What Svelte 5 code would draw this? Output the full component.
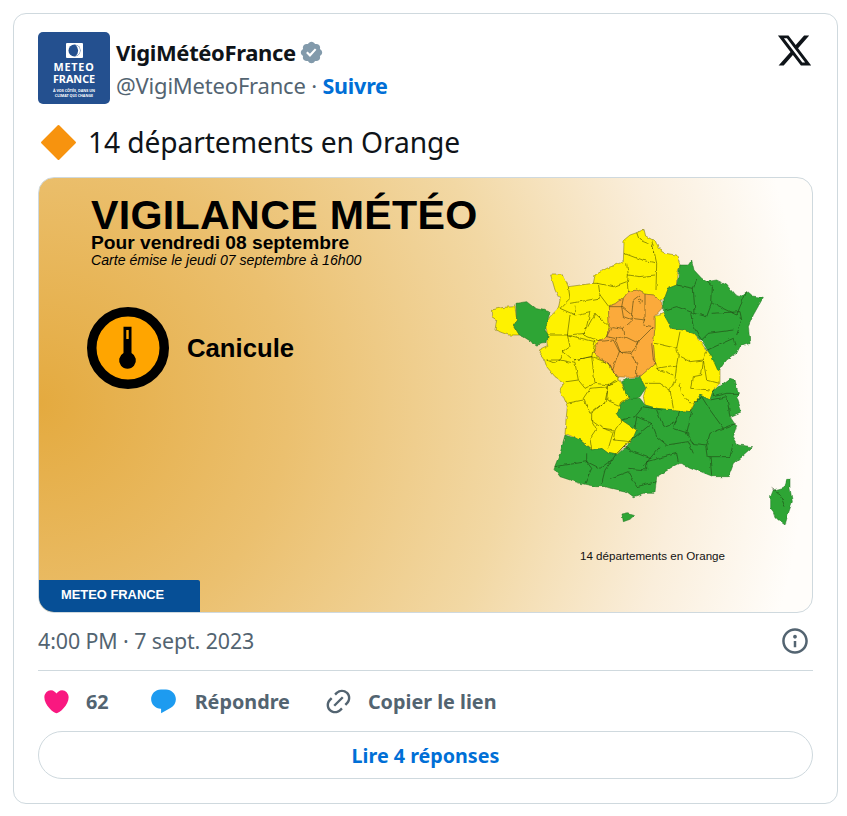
<script>
  const yellow = [
    "432,60 450,45 470,38 492,28 497,48 515,58 525,60 535,85 560,100 590,105 600,135 590,170 590,195 565,205 552,240 540,240 520,225 495,222 470,210 445,215 430,235 410,250 385,258 388,320 380,350 355,365 340,395 350,410 385,430 395,450 415,470 425,490 440,520 450,535 420,555 412,580 425,600 470,630 455,665 430,680 410,705 385,700 365,685 335,690 300,660 255,640 258,600 262,560 240,510 255,490 225,470 200,440 190,410 175,390 205,375 200,330 195,315 210,290 235,265 240,240 225,210 212,165 250,165 265,200 340,190 345,165 380,145 430,125",
    "525,290 550,280 575,325 610,330 640,340 680,390 700,410 720,450 720,490 700,510 690,540 660,525 630,575 590,570 550,568 530,565 495,555 490,530 497,505 480,470 525,430 520,370 525,320",
    "35,270 70,262 105,260 110,300 100,315 118,345 85,345 45,330 50,300 35,290"
  ];
  const orange = "430,235 445,215 470,210 495,222 520,225 540,240 552,262 525,290 525,320 520,370 525,430 480,470 440,472 415,470 395,450 385,430 350,410 340,395 355,365 380,350 388,320 385,258 410,250";
  const green = [
    "600,135 625,135 635,120 642,150 665,175 680,185 710,180 740,195 765,225 780,230 800,215 815,228 850,232 820,285 805,320 810,370 780,380 770,400 740,420 715,455 695,410 670,370 640,340 610,330 575,325 550,280 552,240 565,205 590,195",
    "108,250 140,245 165,265 210,275 195,330 205,345 200,370 170,375 130,350 118,345 100,315 110,300",
    "425,485 445,475 480,472 497,505 480,530 460,540 440,525",
    "700,510 730,490 750,475 765,480 775,520 770,530 785,575 750,590 770,620 760,650 775,675 818,680 790,705 760,730 745,770 700,770 650,750 600,730 580,740 530,770 525,820 490,820 460,830 440,815 375,800 350,800 300,790 240,770 222,745 240,700 255,645 300,660 335,690 365,685 385,700 410,705 455,665 470,630 425,600 412,580 420,555 450,535 480,535 495,555 530,565 590,570 630,575 660,525 690,540",
    "426,882 445,878 465,884 450,898 430,905",
    "920,775 930,775 930,805 937,845 925,880 915,915 895,900 885,890 880,875 872,865 872,830 880,810 915,800"
  ];
  const lines = [
    "M470 38 L478 60 L515 75 L525 100 M515 60 L530 130 L528 210 M432 100 L485 120 L525 128 M445 165 L480 170 L525 165 M445 165 L440 130 M445 165 L442 190 L445 215",
    "M340 190 L355 190 L400 200 L440 185 M355 190 L360 225 M265 200 L270 235 L240 265 M270 250 L355 235 L360 225 L385 258 M285 260 L283 285",
    "M240 265 L285 285 L330 275 L315 340 L262 345 L270 285 M345 280 L388 320 M345 280 L310 345 L355 362 M205 345 L262 345 L270 380 L250 395 L240 420 L225 430 L200 420",
    "M262 345 L345 365 L335 410 L280 420 L250 395 M200 420 L240 420 L285 430 L295 480 L260 485 M280 420 L335 410 L345 490 L315 505 L295 480 M335 410 L385 430 L415 475 L385 495 L345 490",
    "M420 480 L385 495 L380 540 L415 555 L450 530 M330 505 L385 500 L375 545 L330 580 L310 535 Z M260 550 L310 540 M375 545 L335 580 L335 600 L370 625 L405 630 L425 600 M335 600 L350 625 L330 655 L335 690 M370 625 L400 635 L385 685 M405 630 L400 660 L455 665",
    "M525 370 L590 385 L600 335 M515 370 L520 420 L530 445 L590 435 L595 405 L590 385 M600 410 L630 425 L670 420 L680 395 M670 420 L665 465 L640 470 L635 505 L690 510 M590 435 L585 480 L570 510 L580 565 M530 445 L580 465 M495 490 L540 490 L570 510 M600 490 L605 520 L630 550 M670 420 L680 480 L718 490",
    "M430 235 L425 260 L455 285 L460 240 L480 225 M495 222 L495 295 L490 310 M455 285 L455 295 L495 300 M385 260 L425 260 L430 290 L458 300 L430 325 L395 320 M430 325 L435 350 L472 368 L520 320 M490 315 L520 320 M395 320 L380 350 L405 355 L420 395 L470 390 L472 368 M430 350 L405 355 M355 365 L400 360 L418 395 L398 450 M418 395 L450 400 L470 430 L470 470 M450 400 L478 365",
    "M590 195 L640 205 L650 180 M640 205 L645 280 L630 275 L590 260 L555 270 M645 280 L680 290 L695 250 L697 200 L680 185 M697 250 L770 285 L780 260 L800 215 M695 280 L780 275 L785 300 L770 345 M632 280 L640 320 L665 360 L685 340 L760 330 M682 390 L760 355 L765 375",
    "M700 510 L700 530 L740 520 L775 520 M690 540 L740 530 L750 590 M630 575 L640 550 L665 530 L690 570 L730 625 L690 640 L680 675 M730 625 L770 610 M635 575 L620 640 L635 670 L680 675 L685 710 L750 710 L760 670 M690 710 L695 765 M600 570 L580 625 L625 640 M530 570 L550 620 L590 605",
    "M470 590 L515 610 L530 650 L560 675 L625 665 L640 700 M515 610 L460 655 L430 680 L470 700 L510 715 L540 680 M430 680 L410 700 L375 750 L365 790 M320 700 L320 725 L360 745 L395 720 M225 740 L320 725 L335 745 L315 790 M390 775 L445 755 L470 800 L530 785 M445 745 L500 750 L500 725 L590 700 L595 725 M470 590 L465 625 M545 570 L490 560 L465 590 L425 600 M490 740 L510 715",
    "M875 805 L900 825 L915 860"
  ];
</script>

<div class="card">
  <header class="head">
    <div class="avatar">
      <div class="logo-mark"><svg viewBox="0 0 17 15" width="17" height="15"><circle cx="8.500" cy="7.500" r="6" fill="#24508f"/><path d="M9.500 2a5.600 5.600 0 0 1 0 11 7 7 0 0 0 0-11z" fill="#fff"/></svg></div>
      <div class="logo-name"><span class="l1">METEO</span><span class="l2">FRANCE</span></div>
      <div class="logo-tag">À VOS CÔTÉS, DANS UN<br />CLIMAT QUI CHANGE</div>
    </div>
    <div class="who">
      <div class="name-row">
        <span class="name">VigiMétéoFrance</span>
        <svg class="badge" viewBox="0 0 24 24"><path d="M22.25 12c0-1.43-.88-2.67-2.19-3.34.46-1.39.2-2.9-.81-3.91s-2.52-1.27-3.91-.81c-.66-1.31-1.91-2.19-3.34-2.19s-2.67.88-3.33 2.19c-1.4-.46-2.91-.2-3.92.81s-1.26 2.52-.8 3.91c-1.31.67-2.2 1.91-2.2 3.34s.89 2.67 2.2 3.34c-.46 1.39-.21 2.9.8 3.91s2.52 1.26 3.91.81c.67 1.31 1.91 2.19 3.34 2.19s2.68-.88 3.34-2.19c1.39.45 2.9.2 3.91-.81s1.27-2.52.81-3.91c1.31-.67 2.19-1.91 2.19-3.34zm-11.71 4.2L6.8 12.46l1.41-1.42 2.26 2.26 4.8-5.23 1.47 1.36-6.2 6.77z"/></svg>
      </div>
      <div class="handle-row"><span class="handle">@VigiMeteoFrance</span> · <span class="follow">Suivre</span></div>
    </div>
    <svg class="x" viewBox="0 0 24 24"><path d="M18.244 2.25h3.308l-7.227 8.26 8.502 11.24H16.17l-5.214-6.817L4.99 21.75H1.68l7.73-8.835L1.254 2.25H8.08l4.713 6.231zm-1.161 17.52h1.833L7.084 4.126H5.117z"/></svg>
  </header>

  <p class="text">
    <svg class="diamond" viewBox="0 0 36 36"><polygon points="18,2 34,18 18,34 2,18" /></svg>
    <span>14 départements en Orange</span>
  </p>

  <div class="poster">
    <div class="poster-head">
      <div class="p-title">VIGILANCE MÉTÉO</div>
      <div class="p-sub">Pour vendredi 08 septembre</div>
      <div class="p-date">Carte émise le jeudi 07 septembre à 16h00</div>
    </div>
    <div class="hazard">
      <svg class="thermo" viewBox="0 0 84 84">
        <circle cx="42" cy="42" r="36.250" fill="#ffa500" stroke="#000" stroke-width="9.500" />
        <path d="M37.500 20.700h8v26.300a8.400 8.400 0 1 1-8 0z" fill="#000" />
        <rect x="40.300" y="24" width="2.400" height="9" fill="#ffa500" />
      </svg>
      <span class="hazard-name">Canicule</span>
    </div>
    <svg class="map" viewBox="0 0 960 930">
      <defs>
        <filter id="rough" x="-5%" y="-5%" width="110%" height="110%">
          <feTurbulence type="fractalNoise" baseFrequency="0.045" numOctaves="2" seed="4" result="n" />
          <feDisplacementMap in="SourceGraphic" in2="n" scale="11" xChannelSelector="R" yChannelSelector="G" />
        </filter>
      </defs>
      <g filter="url(#rough)">
        <g stroke="#6b6416" stroke-width="1.500" stroke-linejoin="round">
          {#each yellow as p}<polygon points={p} fill="#fef200" />{/each}
        </g>
        <polygon points={orange} fill="#fbaa3a" stroke="#7a5c1a" stroke-width="1.500" stroke-linejoin="round" />
        <g stroke="#1d6f1d" stroke-width="1.500" stroke-linejoin="round">
          {#each green as p}<polygon points={p} fill="#2ea535" />{/each}
        </g>
        <g fill="none" stroke="#1f2a0c" stroke-width="1.500" stroke-linejoin="round" opacity="0.95">
          {#each lines as d}<path {d} />{/each}
          <circle cx="481" cy="243" r="6" />
        </g>
      </g>
    </svg>
    <div class="map-caption">14 départements en Orange</div>
    <div class="brand">METEO FRANCE</div>
  </div>

  <div class="meta">
    <span>4:00 PM · 7 sept. 2023</span>
    <svg class="info" viewBox="0 0 24 24"><path d="M13.500 8.500c0 .83-.67 1.500-1.500 1.500s-1.500-.67-1.500-1.500S11.170 7 12 7s1.500.67 1.500 1.500zM13 17v-5h-2v5h2zm-1 5.250c5.660 0 10.250-4.590 10.250-10.250S17.660 1.750 12 1.750 1.750 6.340 1.750 12 6.340 22.250 12 22.250zM20.250 12c0 4.560-3.690 8.250-8.250 8.250S3.750 16.560 3.750 12 7.440 3.750 12 3.750 20.250 7.440 20.250 12z"/></svg>
  </div>

  <div class="actions">
    <div class="act like">
      <svg viewBox="0 0 24 24"><path fill="#f91880" d="M12 21.638h-.014C9.403 21.590 1.950 14.856 1.950 8.478c0-3.064 2.525-5.754 5.403-5.754 2.290 0 3.830 1.580 4.646 2.730.814-1.148 2.354-2.730 4.645-2.730 2.880 0 5.404 2.690 5.404 5.755 0 6.376-7.454 13.110-10.037 13.157H12z"/></svg>
      <span>62</span>
    </div>
    <div class="act reply">
      <svg viewBox="0 0 24 24"><path fill="#1d9bf0" d="M1.751 10c0-4.420 3.584-8 8.005-8h4.366c4.490 0 8.129 3.640 8.129 8.130 0 2.960-1.607 5.680-4.196 7.110l-8.054 4.460v-3.690h-.067c-4.490.1-8.183-3.510-8.183-8.010z"/></svg>
      <span>Répondre</span>
    </div>
    <div class="act link">
      <svg viewBox="0 0 24 24"><path fill="#536471" d="M18.360 5.640c-1.950-1.960-5.110-1.960-7.070 0L9.880 7.050 8.460 5.640l1.420-1.420c2.730-2.730 7.160-2.730 9.900 0 2.730 2.740 2.730 7.170 0 9.900l-1.420 1.420-1.410-1.420 1.410-1.410c1.960-1.960 1.960-5.120 0-7.070zm-2.120 3.530l-7.070 7.070-1.410-1.410 7.070-7.070 1.410 1.410zm-12.020.71l1.420-1.420 1.410 1.420-1.410 1.410c-1.960 1.960-1.960 5.120 0 7.070 1.950 1.960 5.110 1.960 7.070 0l1.410-1.410 1.420 1.410-1.420 1.420c-2.730 2.730-7.160 2.730-9.900 0-2.730-2.740-2.730-7.170 0-9.900z"/></svg>
      <span>Copier le lien</span>
    </div>
  </div>

  <div class="more">Lire 4 réponses</div>
</div>

<style>
  :global(body) {
    margin: 0;
    background: #fff;
  }
  .card {
    box-sizing: border-box;
    width: 825px;
    height: 791px;
    margin: 13px 0 0 13px;
    padding: 18px 24px 0;
    border: 1px solid #cfd9de;
    border-radius: 13px;
    font-family: "Noto Sans", "Open Sans", sans-serif;
    color: #0f1419;
    background: #fff;
  }
  .head {
    display: flex;
    align-items: flex-start;
    height: 72px;
  }
  .avatar {
    width: 72px;
    height: 72px;
    flex: none;
    border-radius: 5px;
    background: #24508f;
    color: #fff;
    display: flex;
    flex-direction: column;
    align-items: center;
    text-align: center;
  }
  .logo-mark {
    width: 17px;
    height: 15px;
    margin-top: 11px;
    background: #fff;
    border-radius: 1px;
    display: flex;
  }
  .logo-name {
    margin-top: 3px;
    font-size: 10.800px;
    line-height: 11.500px;
    font-weight: 700;
  }
  .l1,
  .l2 {
    display: block;
  }
  .l1 {
    letter-spacing: 0.8px;
  }
  .l2 {
    letter-spacing: 0;
  }
  .logo-tag {
    margin-top: 3.500px;
    font-size: 3.700px;
    line-height: 5px;
    font-weight: 700;
  }
  .who {
    margin-left: 6px;
    flex: 1;
  }
  .name-row {
    display: flex;
    align-items: center;
    height: 28px;
    margin-top: 6px;
  }
  .name {
    font-size: 22px;
    font-weight: 700;
    letter-spacing: -0.35px;
  }
  .badge {
    width: 25px;
    height: 25px;
    margin-left: 3px;
    fill: #829aab;
  }
  .handle-row {
    margin-top: 4px;
    font-size: 22px;
    line-height: 30px;
    color: #536471;
    letter-spacing: -0.2px;
  }
  .follow {
    color: #006fd6;
    font-weight: 700;
    font-size: 21.500px;
  }
  .x {
    width: 37px;
    height: 37px;
    flex: none;
    fill: #0f1419;
  }
  .text {
    display: flex;
    align-items: center;
    margin: 18px 0 0;
    height: 40px;
    font-size: 28.200px;
    line-height: 40px;
    letter-spacing: -0.1px;
  }
  .diamond {
    width: 37px;
    height: 37px;
    margin: 0 11.500px 0 1.500px;
    fill: #f7930e;
    stroke: #f7930e;
    stroke-width: 2;
    stroke-linejoin: round;
  }
  .poster {
    position: relative;
    box-sizing: border-box;
    width: 775px;
    height: 436px;
    margin-top: 15px;
    border: 1px solid #cfd9de;
    border-radius: 16px;
    overflow: hidden;
    font-family: "Liberation Sans", sans-serif;
    color: #000;
    background: radial-gradient(circle at 0 52%, #e4aa3f 0, #ebc06f 250px, #f2d8a4 470px, #faeedb 640px, #fffdfa 770px);
  }
  .poster-head {
    padding: 17px 0 0 52px;
  }
  .p-title {
    font-size: 41.200px;
    line-height: 40px;
    font-weight: 700;
    letter-spacing: 0.3px;
  }
  .p-sub {
    font-size: 19.200px;
    line-height: 16px;
    font-weight: 700;
  }
  .p-date {
    margin-top: 1px;
    font-size: 14.150px;
    line-height: 17px;
    font-style: italic;
  }
  .hazard {
    display: flex;
    align-items: center;
    gap: 17px;
    margin: 37px 0 0 47px;
  }
  .thermo {
    width: 84px;
    height: 84px;
    flex: none;
  }
  .hazard-name {
    font-size: 25.700px;
    font-weight: 700;
  }
  .map {
    position: absolute;
    left: 441px;
    top: 42px;
    width: 320px;
    height: 310px;
  }
  .map-caption {
    position: absolute;
    left: 541px;
    top: 371px;
    font-size: 11.600px;
    line-height: 14px;
    color: #111;
  }
  .brand {
    position: absolute;
    left: 0;
    bottom: 0;
    width: 161px;
    height: 32px;
    box-sizing: border-box;
    padding-left: 22px;
    background: #064f96;
    border-top-right-radius: 2px;
    color: #fff;
    font-size: 12.900px;
    font-weight: 700;
    line-height: 30px;
  }
  .meta {
    display: flex;
    align-items: center;
    justify-content: space-between;
    box-sizing: border-box;
    height: 58px;
    padding-bottom: 2px;
    border-bottom: 1px solid #cfd9de;
    font-size: 21.400px;
    color: #536471;
    letter-spacing: -0.1px;
  }
  .info {
    width: 30px;
    height: 30px;
    fill: #536471;
    margin-right: 3px;
  }
  .actions {
    display: flex;
    align-items: center;
    height: 60px;
    padding-left: 4px;
    font-size: 19.800px;
    font-weight: 700;
    color: #536471;
  }
  .act {
    display: flex;
    align-items: center;
  }
  .act svg {
    width: 29px;
    height: 29px;
    flex: none;
  }
  .act span {
    margin-left: 15px;
  }
  .act.reply span {
    margin-left: 17px;
  }
  .reply {
    margin-left: 40px;
  }
  .link {
    margin-left: 34px;
  }
  .more {
    box-sizing: border-box;
    height: 48px;
    border: 1px solid #cfd9de;
    border-radius: 24px;
    display: flex;
    align-items: center;
    justify-content: center;
    font-size: 19.700px;
    font-weight: 700;
    color: #006fd6;
  }
</style>
